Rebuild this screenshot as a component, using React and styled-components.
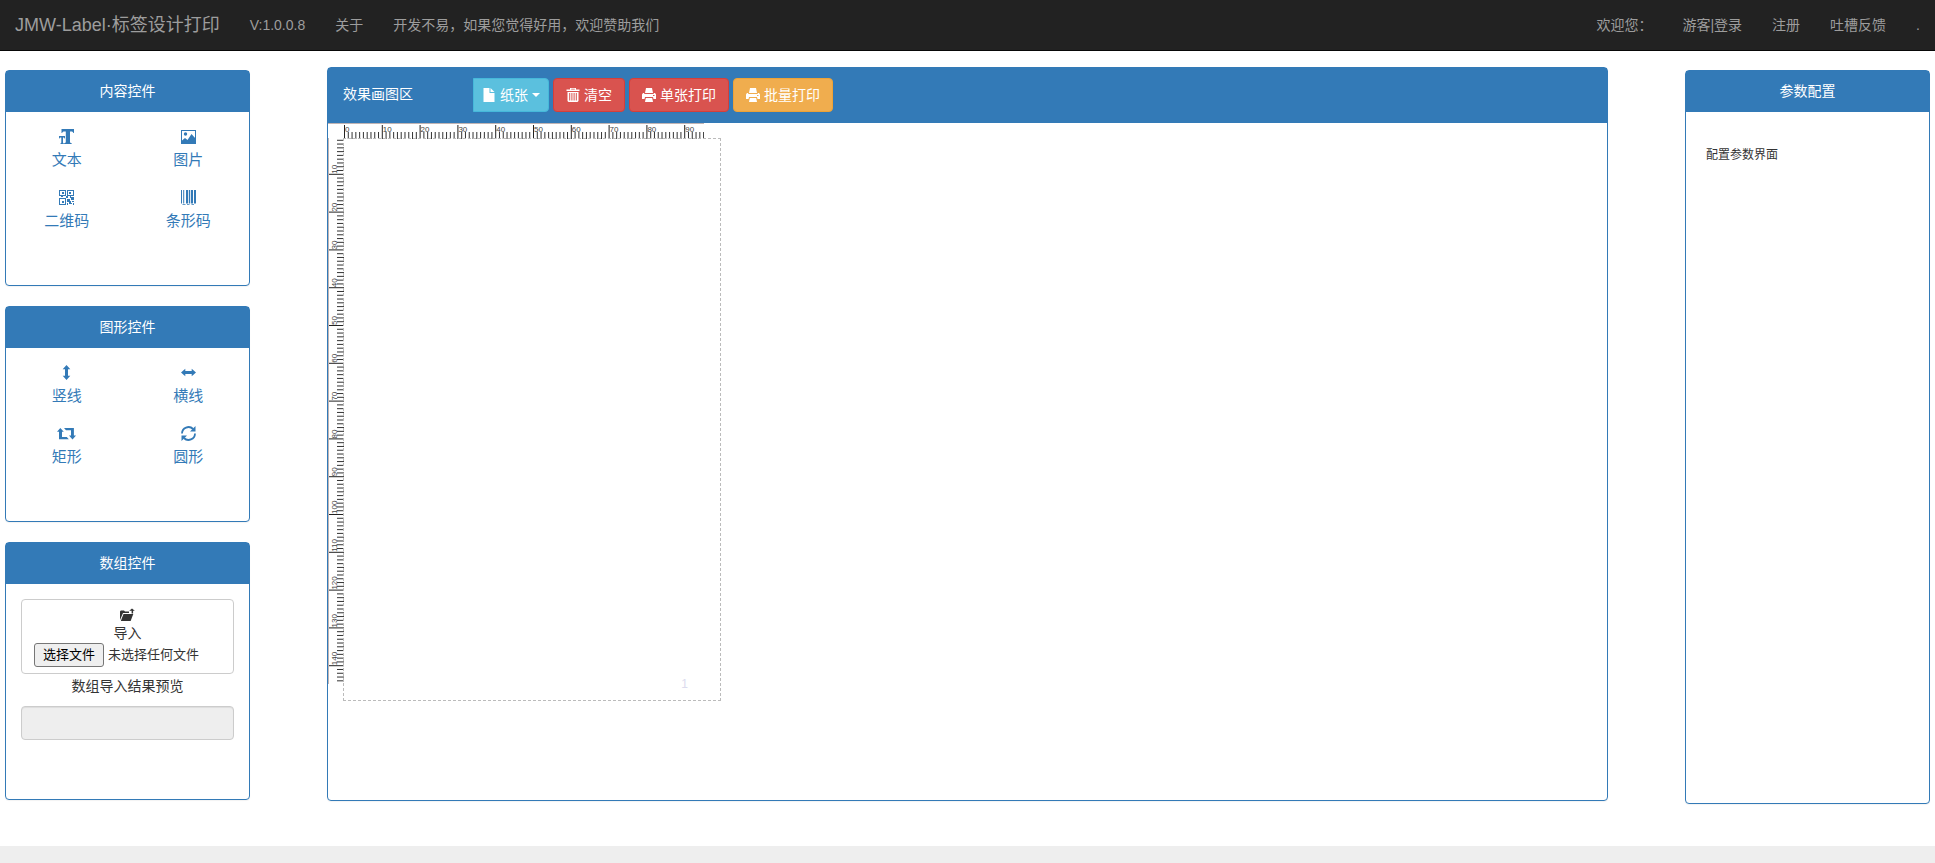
import { useState } from "react";
import styled, { createGlobalStyle } from "styled-components";

// 1mm on the paper, in css pixels
const MM = 3.78;

const contentTools = [
  { name: "文本", icon: TextIcon },
  { name: "图片", icon: PictureIcon },
  { name: "二维码", icon: QrcodeIcon },
  { name: "条形码", icon: BarcodeIcon },
];

const shapeTools = [
  { name: "竖线", icon: VerticalIcon },
  { name: "横线", icon: HorizontalIcon },
  { name: "矩形", icon: RetweetIcon, wide: true },
  { name: "圆形", icon: RefreshIcon },
];

export default function App() {
  const [fileName, setFileName] = useState("");

  return (
    <Page>
      <GlobalStyle />
      <Navbar>
        <Brand href="#">JMW-Label·标签设计打印</Brand>
        <NavLink href="#version">V:1.0.0.8</NavLink>
        <NavLink href="#about">关于</NavLink>
        <NavLink href="#sponsor">开发不易，如果您觉得好用，欢迎赞助我们</NavLink>
        <NavRight>
          <NavLink href="#welcome">欢迎您：</NavLink>
          <NavLink href="#login">游客|登录</NavLink>
          <NavLink href="#register">注册</NavLink>
          <NavLink href="#feedback">吐槽反馈</NavLink>
          <NavLink href="#more">.</NavLink>
        </NavRight>
      </Navbar>

      <Main>
        <Sidebar>
          <ToolPanel title="内容控件" tools={contentTools} />
          <ToolPanel title="图形控件" tools={shapeTools} />
          <Panel $minHeight={258}>
            <PanelHeading>数组控件</PanelHeading>
            <ImportBody>
              <ImportBox>
                <FolderIcon />
                <ImportLabel htmlFor="file">导入</ImportLabel>
                <FileRow>
                  <FileInput
                    id="file"
                    type="file"
                    onChange={(e) => setFileName(e.target.files[0]?.name || "")}
                  />
                  <FileButton htmlFor="file">选择文件</FileButton>
                  <FileName>{fileName || "未选择任何文件"}</FileName>
                </FileRow>
              </ImportBox>
              <PreviewLabel htmlFor="preview">数组导入结果预览</PreviewLabel>
              <PreviewInput id="preview" type="text" disabled />
            </ImportBody>
          </Panel>
        </Sidebar>

        <Center>
          <Panel $minHeight={734}>
            <Toolbar>
              <ToolbarTitle>效果画图区</ToolbarTitle>
              <Buttons>
                <PaperButton type="button" $bg="#5bc0de" $border="#46b8da">
                  <FileIcon />
                  纸张
                  <Caret />
                </PaperButton>
                <Button type="button" $bg="#d9534f" $border="#d43f3a">
                  <TrashIcon />
                  清空
                </Button>
                <Button type="button" $bg="#d9534f" $border="#d43f3a">
                  <PrintIcon />
                  单张打印
                </Button>
                <Button type="button" $bg="#f0ad4e" $border="#eea236">
                  <PrintIcon />
                  批量打印
                </Button>
              </Buttons>
            </Toolbar>
            <Workspace>
              <TopRuler />
              <LeftRuler />
              <Paper>
                <PageNumber>1</PageNumber>
              </Paper>
            </Workspace>
          </Panel>
        </Center>

        <Sidebar>
          <Panel $minHeight={734}>
            <PanelHeading>参数配置</PanelHeading>
            <ConfigBody>配置参数界面</ConfigBody>
          </Panel>
        </Sidebar>
      </Main>
      <Footer />
    </Page>
  );
}

function ToolPanel({ title, tools }) {
  return (
    <Panel $minHeight={216}>
      <PanelHeading>{title}</PanelHeading>
      <Tools>
        {tools.map(({ name, icon: ToolIcon, wide }) => (
          <Tool key={name} href="#" $wide={wide}>
            <ToolIcon />
            {name}
          </Tool>
        ))}
      </Tools>
    </Panel>
  );
}

function TopRuler() {
  const ticks = Array.from({ length: 96 }, (_, i) => i);
  return (
    <TopRulerSvg width="376" height="16" viewBox="0 0 376 16" aria-hidden="true">
      <rect width="376" height="1" fill="#c0b4b4" />
      {ticks.map((i) => (
        <rect
          key={i}
          x={16 + i * MM}
          y={i % 10 ? 9 : 2}
          width="1"
          height={i % 10 ? 7 : 14}
          fill={i % 10 ? "#333" : "#222"}
        />
      ))}
      {ticks.filter((i) => i % 10 === 0).map((i) => (
        <text key={i} x={17 + i * MM} y="9">{i}</text>
      ))}
    </TopRulerSvg>
  );
}

function LeftRuler() {
  const ticks = Array.from({ length: 144 }, (_, i) => i + 1);
  return (
    <LeftRulerSvg width="16" height="546" viewBox="0 0 16 546" aria-hidden="true">
      <rect width="1" height="546" fill="#c0b4b4" />
      {ticks.map((i) => (
        <rect
          key={i}
          x={i % 10 ? 9 : 1}
          y={i * MM - 2}
          width={i % 10 ? 7 : 15}
          height="1"
          fill={i % 10 ? "#333" : "#222"}
        />
      ))}
      {ticks.filter((i) => i % 10 === 0).map((i) => (
        <text key={i} transform={`translate(9 ${i * MM - 2}) rotate(-90)`}>{i}</text>
      ))}
    </LeftRulerSvg>
  );
}

function TextIcon() {
  return (
    <Icon viewBox="0 0 15 15">
      <path d="M2.5 0H15v4h-.7c-.2-1-.8-1.500-2-1.500h-1.300v10.300c0 .9.4 1.200 1.600 1.300v.9H5.200v-.9c1.200-.1 1.600-.4 1.600-1.300V2.500H5.200c-1.200 0-1.800.5-2 1.500h-.7z" />
      <path d="M0 7h6v2.500h-.5c-.1-.7-.5-1-1.100-1H4v5c0 .5.300.7.800.7v.8H1.500v-.8c.5 0 .8-.2.8-.7v-5h-.7c-.6 0-1 .3-1.100 1H0z" />
    </Icon>
  );
}

function PictureIcon() {
  return (
    <Icon viewBox="0 0 15 15">
      <path fillRule="evenodd" d="M0 1h15v14H0zm1 1v12h13V2z" />
      <circle cx="4.500" cy="5" r="1.700" />
      <path d="M1 14v-2.500l3-2.500 2.500 2L10.500 5l4 4.500V14z" />
    </Icon>
  );
}

function QrcodeIcon() {
  return (
    <Icon viewBox="0 0 15 15" shapeRendering="crispEdges">
      <path
        fillRule="evenodd"
        d="M0 0h7v6H0zM1 1v4h5V1zM8 0h7v6H8zM9 1v4h5V1zM0 8h7v7H0zM1 9v5h5V9z"
      />
      <path d="M3 2h2v2H3zM10 2h2v2h-2zM3 11h2v2H3zM2 6h2v1H2zM7 6h2v2H7zM11 6h1v2h-1zM8 9h3v3H8zM12 7h3v3h-3zM10 11h2v3h-2zM13 11h2v1h-2zM8 13h1v2H8zM12 13h1v1h-1zM14 13h1v2h-1z" />
    </Icon>
  );
}

function BarcodeIcon() {
  return (
    <Icon viewBox="0 0 15 15">
      <path d="M0 0h1v13.500H0zM2.200 0h1v13.500h-1zM5 0h2v13.500H5zM7.800 0h1.200v13.500H7.800zM9.800 0h2.200v13.500H9.800zM13 0h2v13.500h-2zM1.500 14.200h3v.8h-3zM6 14.200h2.500v.8H6zM10.500 14.200h2.500v.8h-2.500z" />
    </Icon>
  );
}

function VerticalIcon() {
  return (
    <Icon viewBox="0 0 15 15">
      <path d="M7.500 0L11.300 4.300H9v6.400h2.300L7.500 15 3.700 10.700H6V4.300H3.700z" />
    </Icon>
  );
}

function HorizontalIcon() {
  return (
    <Icon viewBox="0 0 15 15">
      <path d="M0 7.500L4.300 3.700V6h6.400V3.700L15 7.500 10.700 11.300V9H4.300v2.300z" />
    </Icon>
  );
}

function RetweetIcon() {
  return (
    <Icon viewBox="0 0 19 15">
      <path d="M3.300 2L6.800 5.800H5v5.200h4.800l2 2.300H2V5.800H0zM7 2h9.900v7.500H19l-3.500 3.900-3.500-3.900h2V4.300H9z" />
    </Icon>
  );
}

function RefreshIcon() {
  return (
    <Icon viewBox="0 0 15 15">
      <path
        fill="none"
        stroke="currentColor"
        strokeWidth="1.800"
        d="M1 7.500A6.500 6.500 0 0 1 12.100 3M14 7.500A6.500 6.500 0 0 1 2.900 12"
      />
      <path d="M14.500 0v5.500H9zM.5 15V9.500H6z" />
    </Icon>
  );
}

function FolderIcon() {
  return (
    <FolderSvg viewBox="0 0 15 14" aria-hidden="true">
      <path d="M0 12V3.500l.8-1H4l1 1h4V5H3z" />
      <path d="M3.500 6h9.800L10.600 13H.8z" />
      <path d="M12 .5l2.800 2.200h-1.700v2.800H11.600V2.700H9.200z" />
    </FolderSvg>
  );
}

function FileIcon() {
  return (
    <ButtonIcon viewBox="0 0 14 14" aria-hidden="true">
      <path d="M1.500 0h6v5h5v9h-11z" />
      <path d="M8.500 0l4 4h-4z" />
    </ButtonIcon>
  );
}

function TrashIcon() {
  return (
    <ButtonIcon viewBox="0 0 14 14" aria-hidden="true">
      <path fillRule="evenodd" d="M4 0h6v1.500h3.500V3H.5V1.500H4zm1.200.8v.7h3.600V.8z" />
      <path
        fillRule="evenodd"
        d="M1.500 4h11v9l-1 1h-9l-1-1zm1.700 1v7.500h1V5zm2.200 0v7.500h1V5zm2.200 0v7.500h1V5zm2.200 0v7.500h1V5z"
      />
    </ButtonIcon>
  );
}

function PrintIcon() {
  return (
    <ButtonIcon viewBox="0 0 14 14" aria-hidden="true">
      <path d="M4 0h6l1 5H3z" />
      <path fillRule="evenodd" d="M1 5h1l.5 1h9l.5-1h1l1 1.500V11h-2.500l-.5-2H3l-.5 2H0V6.500zm10 2v1h1.500V7z" />
      <path d="M3.800 10h6.400l.8 4H3z" />
    </ButtonIcon>
  );
}

const GlobalStyle = createGlobalStyle`
  * {
    box-sizing: border-box;
  }

  body {
    margin: 0;
    background: #fff;
    color: #333;
    font-family: "Liberation Sans", "Noto Sans CJK SC", sans-serif;
    font-size: 14px;
    line-height: 20px;
  }

  a {
    text-decoration: none;
  }

  button, input {
    font: inherit;
  }
`;

const Page = styled.div`
  display: flex;
  flex-direction: column;
  min-height: 100vh;
`;

const Navbar = styled.nav`
  display: flex;
  align-items: center;
  min-height: 51px;
  background: #222;
  border-bottom: 1px solid #080808;
`;

const NavLink = styled.a`
  padding: 15px;
  color: #9d9d9d;
  white-space: nowrap;
`;

const Brand = styled(NavLink)`
  font-size: 18px;
`;

const NavRight = styled.div`
  display: flex;
  margin-left: auto;
`;

const Main = styled.main`
  display: flex;
  padding: 16px 5px 42px;
`;

const Sidebar = styled.aside`
  display: flex;
  flex-direction: column;
  gap: 20px;
  flex: 0 0 245px;
  padding-top: 3px;
`;

const Center = styled.section`
  flex: 1;
  min-width: 0;
  padding: 0 4%;
`;

const Panel = styled.div`
  min-height: ${(props) => props.$minHeight}px;
  border: 1px solid #337ab7;
  border-radius: 4px;
  background: #fff;
  box-shadow: 0 1px 1px rgba(0, 0, 0, 0.05);
`;

const PanelHeading = styled.div`
  padding: 10px 15px 11px;
  background: #337ab7;
  color: #fff;
  text-align: center;
`;

const Tools = styled.div`
  display: grid;
  grid-template-columns: 1fr 1fr;
  row-gap: 20px;
  padding-top: 17px;
`;

const Tool = styled.a`
  display: flex;
  flex-direction: column;
  align-items: center;
  gap: 5px;
  color: #337ab7;
  font-size: 15px;
  line-height: 21px;

  > svg {
    width: ${(props) => (props.$wide ? "19px" : "15px")};
  }
`;

const Icon = styled.svg`
  height: 15px;
  fill: currentColor;
`;

const ImportBody = styled.div`
  display: flex;
  flex-direction: column;
  padding: 15px;
`;

const ImportBox = styled.div`
  display: flex;
  flex-direction: column;
  align-items: center;
  padding: 8px 12px 6px;
  border: 1px solid #ccc;
  border-radius: 4px;
`;

const FolderSvg = styled.svg`
  width: 15px;
  height: 14px;
  margin-bottom: 1px;
  fill: currentColor;
`;

const ImportLabel = styled.label`
  cursor: pointer;
`;

const FileRow = styled.div`
  display: flex;
  align-items: center;
  align-self: stretch;
  gap: 4px;
  position: relative;
  font-size: 13px;
`;

/* the native control is covered by the button label */
const FileInput = styled.input`
  position: absolute;
  width: 70px;
  height: 24px;
  opacity: 0;
`;

const FileButton = styled.label`
  width: 70px;
  padding: 1px 0;
  border: 1px solid #767676;
  border-radius: 3px;
  background: #efefef;
  color: #000;
  text-align: center;
  cursor: pointer;
`;

const FileName = styled.span`
  overflow: hidden;
  white-space: nowrap;
  text-overflow: ellipsis;
`;

const PreviewLabel = styled.label`
  padding: 2px 0 10px;
  text-align: center;
`;

const PreviewInput = styled.input`
  width: 100%;
  height: 34px;
  padding: 6px 12px;
  border: 1px solid #ccc;
  border-radius: 4px;
  background: #eee;
  box-shadow: inset 0 1px 1px rgba(0, 0, 0, 0.075);
`;

const Toolbar = styled.div`
  display: flex;
  align-items: center;
  gap: 60px;
  padding: 10px 15px;
  background: #337ab7;
  border-bottom: 1px solid #337ab7;
  color: #fff;
`;

const ToolbarTitle = styled.span`
  padding-bottom: 2px;
  white-space: nowrap;
`;

const Buttons = styled.div`
  display: flex;
  gap: 4px;
`;

const Button = styled.button`
  display: flex;
  align-items: center;
  gap: 4px;
  padding: 6px 12px;
  border: 1px solid ${(props) => props.$border};
  border-radius: 4px;
  background: ${(props) => props.$bg};
  color: #fff;
  white-space: nowrap;
  cursor: pointer;
`;

const PaperButton = styled(Button)`
  padding: 6px 8px;
  border-radius: 0 4px 4px 0;
`;

const ButtonIcon = styled.svg`
  width: 14px;
  height: 14px;
  fill: currentColor;
`;

const Caret = styled.span`
  border-top: 4px solid;
  border-left: 4px solid transparent;
  border-right: 4px solid transparent;
`;

const Workspace = styled.div`
  display: grid;
  grid-template-columns: 15px 1fr;
  grid-template-rows: 15px auto;
`;

const Ruler = styled.svg`
  display: block;

  text {
    fill: #444;
    font-size: 8px;
  }
`;

const TopRulerSvg = styled(Ruler)`
  grid-column: 1 / -1;
`;

const LeftRulerSvg = styled(Ruler)`
  grid-column: 1;
`;

const Paper = styled.div`
  display: flex;
  align-items: flex-end;
  justify-content: flex-end;
  width: 378px;
  height: 563px;
  padding: 6px 32px;
  border: 1px dashed #bbb;
`;

const PageNumber = styled.span`
  color: #dcdcee;
  font-size: 12px;
`;

const ConfigBody = styled.div`
  padding: 33px 20px;
  font-size: 12px;
`;

const Footer = styled.footer`
  flex: 1;
  min-height: 17px;
  background: #eee;
`;
